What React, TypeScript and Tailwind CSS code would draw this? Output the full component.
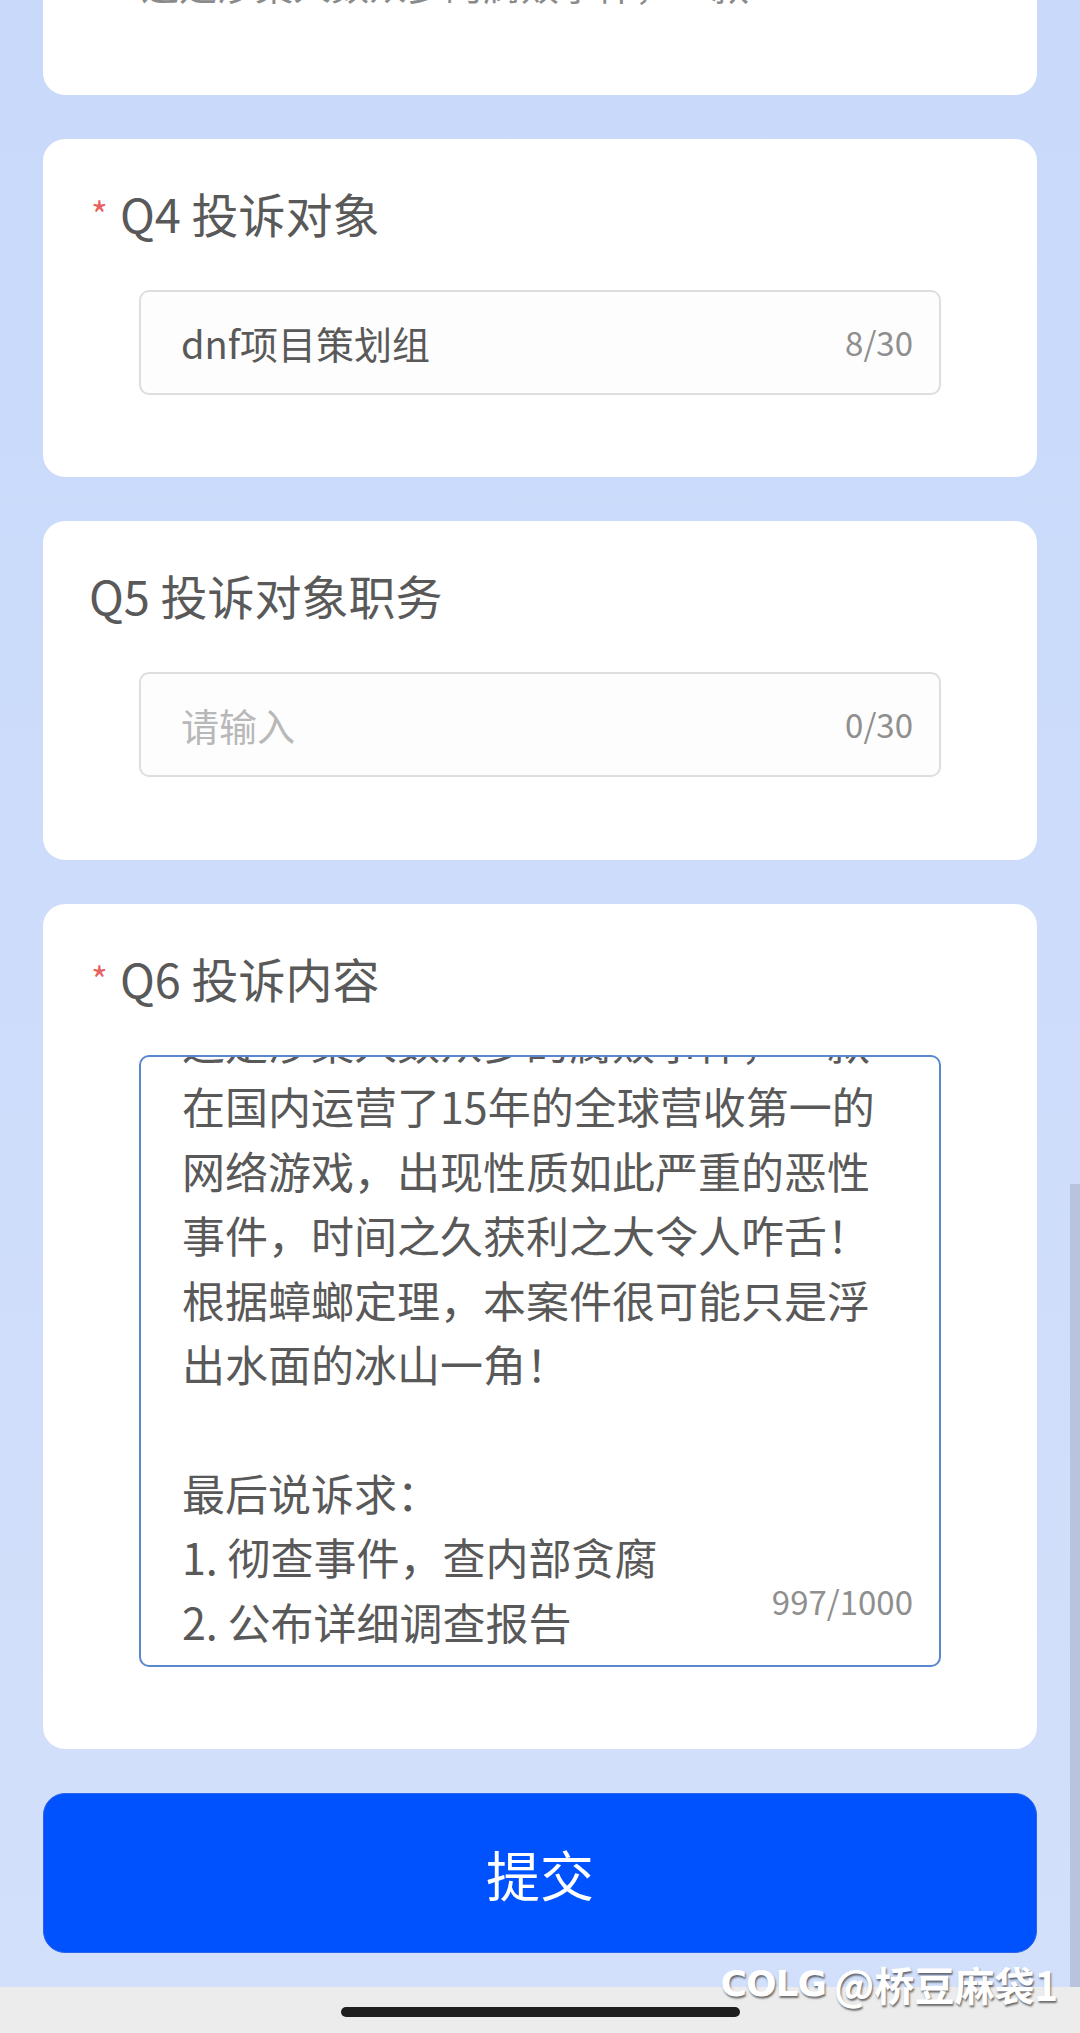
import React from "react";

const font = { fontFamily: '"Noto Sans CJK SC", "Noto Sans", sans-serif' };

const Title: React.FC<{ required?: boolean; text: string }> = ({ required, text }) => (
  <div className="flex items-start h-[60px] leading-[60px] text-[47px] text-[#595959]">
    {required && (
      <span className="w-[31px] pl-[2px] text-[36px] leading-none text-[#e8615f] mt-[12px]">*</span>
    )}
    <span>{text}</span>
  </div>
);

const TextInput: React.FC<{ value?: string; placeholder: string; count: string }> = ({
  value,
  placeholder,
  count,
}) => (
  <div className="mx-[50px] mt-[47px] h-[105px] rounded-[10px] border-2 border-[#dedede] bg-[#fdfdfd] flex items-center pl-[40px] pr-[26px]">
    <div className={"flex-1 text-[38px] " + (value ? "text-[#595959]" : "text-[#b8b8b8]")}>
      {value || placeholder}
    </div>
    <div className="text-[33px] text-[#8f8f8f]">{count}</div>
  </div>
);

const lines = [
  "在国内运营了15年的全球营收第一的",
  "网络游戏，出现性质如此严重的恶性",
  "事件，时间之久获利之大令人咋舌！",
  "根据蟑螂定理，本案件很可能只是浮",
  "出水面的冰山一角！",
  "",
  "最后说诉求：",
  "1. 彻查事件，查内部贪腐",
  "2. 公布详细调查报告",
];

export default function App() {
  return (
    <div
      className="relative w-[1080px] h-[2033px] overflow-hidden bg-linear-to-b from-[#c8d9fa] to-[#d3e0fb]"
      style={font}
    >
      <div className="flex flex-col gap-[44px] px-[43px]">
        {/* cut-off previous question */}
        <div className="h-[95px] rounded-b-[22px] bg-white overflow-hidden pl-[98px]">
          <div className="-mt-[41px] text-[38px] leading-[50px] text-[#8a8a8a] whitespace-nowrap">
            这是涉案人数众多的腐败事件，一款
          </div>
        </div>

        <div className="rounded-[22px] bg-white pt-[44px] pb-[82px] pl-[46px] pr-[46px]">
          <Title required text="Q4 投诉对象" />
          <TextInput value="dnf项目策划组" placeholder="请输入" count="8/30" />
        </div>

        <div className="rounded-[22px] bg-white pt-[44px] pb-[83px] pl-[46px] pr-[46px]">
          <Title text="Q5 投诉对象职务" />
          <TextInput placeholder="请输入" count="0/30" />
        </div>

        <div className="rounded-[22px] bg-white pt-[44px] pb-[82px] pl-[46px] pr-[46px]">
          <Title required text="Q6 投诉内容" />
          <div className="relative mx-[50px] mt-[47px] h-[612px] rounded-[10px] border-2 border-[#5a88cf] bg-white overflow-hidden">
            <div className="-mt-[48px] pl-[41px] text-[43px] leading-[64.4px] text-[#595959] whitespace-nowrap">
              <div>这是涉案人数众多的腐败事件，一款</div>
              {lines.map((l, i) => (
                <div key={i} className="h-[64.4px]">
                  {l}
                </div>
              ))}
            </div>
            <div className="absolute right-[26px] bottom-[46px] text-[33px] leading-[36px] text-[#8f8f8f] bg-white">
              997/1000
            </div>
          </div>
        </div>

        <button className="h-[160px] rounded-[22px] bg-[#0052ff] border border-[#2a62e8] text-white text-[54px]">
          提交
        </button>
      </div>

      {/* scroll indicator */}
      <div className="absolute right-0 top-[1184px] w-[10px] h-[803px] bg-[#b8c4de]" />

      {/* system bar */}
      <div className="absolute left-0 right-0 bottom-0 h-[46px] bg-[#ececec] flex justify-center">
        <div className="mt-[20px] w-[399px] h-[10px] rounded-full bg-[#1e1e1e]" />
      </div>

      {/* watermark */}
      <div className="absolute right-[22px] top-[1964px] flex items-center gap-[8px] text-white [text-shadow:1px_2px_2px_rgba(0,0,0,0.55)]">
        <span
          className="text-[36px] font-bold tracking-[-1px] leading-none"
          style={{ fontFamily: '"DejaVu Sans", sans-serif' }}
        >
          COLG
        </span>
        <span className="text-[40px] font-bold leading-none">@桥豆麻袋1</span>
      </div>
    </div>
  );
}
